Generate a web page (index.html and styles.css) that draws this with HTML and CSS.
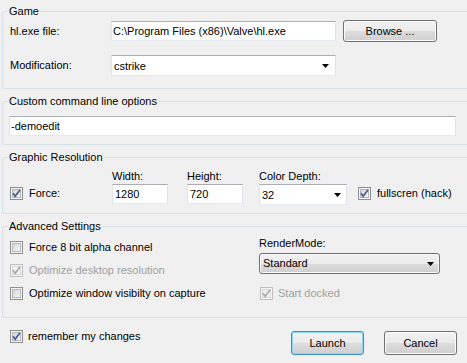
FILE: index.html
```html
<!DOCTYPE html>
<html>
<head>
<meta charset="utf-8">
<link rel="stylesheet" href="styles.css">
</head>
<body>
<div class="dialog">
  <fieldset class="group game">
    <legend>Game</legend>
    <div class="row r1">
      <span class="lbl">hl.exe file:</span>
      <div class="tb path">C:\Program Files (x86)\Valve\hl.exe</div>
      <button class="btn browse">Browse ...</button>
    </div>
    <div class="row r2">
      <span class="lbl">Modification:</span>
      <div class="tb combo path"><span>cstrike</span><svg class="arrow" width="7" height="4" viewBox="0 0 7 4"><path d="M0 0H7L3.5 4Z"/></svg></div>
    </div>
  </fieldset>

  <fieldset class="group custom">
    <legend>Custom command line options</legend>
    <div class="tb cmd">-demoedit</div>
  </fieldset>

  <fieldset class="group graphic">
    <legend>Graphic Resolution</legend>
    <div class="res">
      <span class="h-width">Width:</span>
      <span class="h-height">Height:</span>
      <span class="h-depth">Color Depth:</span>
      <label class="check force"><span class="cb on"><svg width="11" height="11" viewBox="0 0 11 11"><path d="M2 5.2L4.2 8.2L9 1.8"/></svg></span><span>Force:</span></label>
      <div class="tb num in-width">1280</div>
      <div class="tb num in-height">720</div>
      <div class="tb combo depth"><span>32</span><svg class="arrow" width="7" height="4" viewBox="0 0 7 4"><path d="M0 0H7L3.5 4Z"/></svg></div>
      <label class="check full"><span class="cb on"><svg width="11" height="11" viewBox="0 0 11 11"><path d="M2 5.2L4.2 8.2L9 1.8"/></svg></span><span>fullscren (hack)</span></label>
    </div>
  </fieldset>

  <fieldset class="group adv">
    <legend>Advanced Settings</legend>
    <div class="adv-body">
      <div class="left">
        <label class="check"><span class="cb"></span><span>Force 8 bit alpha channel</span></label>
        <label class="check dis"><span class="cb on"><svg width="11" height="11" viewBox="0 0 11 11"><path d="M2 5.2L4.2 8.2L9 1.8"/></svg></span><span>Optimize desktop resolution</span></label>
        <label class="check"><span class="cb"></span><span>Optimize window visibilty on capture</span></label>
      </div>
      <div class="right">
        <span>RenderMode:</span>
        <div class="btn combo rm"><span>Standard</span><svg class="arrow" width="7" height="4" viewBox="0 0 7 4"><path d="M0 0H7L3.5 4Z"/></svg></div>
        <label class="check dis docked"><span class="cb on"><svg width="11" height="11" viewBox="0 0 11 11"><path d="M2 5.2L4.2 8.2L9 1.8"/></svg></span><span>Start docked</span></label>
      </div>
    </div>
  </fieldset>

  <div class="footer">
    <label class="check remember"><span class="cb on"><svg width="11" height="11" viewBox="0 0 11 11"><path d="M2 5.2L4.2 8.2L9 1.8"/></svg></span><span>remember my changes</span></label>
    <button class="btn act launch">Launch</button>
    <button class="btn act cancel">Cancel</button>
  </div>
</div>
</body>
</html>
```

FILE: styles.css
```css
html, body {
  margin: 0;
  background: #f0f0f0;
  overflow: hidden;
}
body {
  width: 467px;
  height: 363px;
  font: 11px/13px "Liberation Sans", Arial, sans-serif;
  color: #000;
}
.dialog {
  padding-top: 5px;
}
.group {
  margin: 0 -8px 0 2px;
  padding: 0;
  border: 1px solid #d5dfe5;
  border-radius: 3px;
  min-inline-size: 0;
}
.group + .group {
  margin-top: 6px;
}
legend {
  margin-left: 5px;
  padding: 0 1px;
  line-height: 13px;
}
.row {
  display: flex;
  align-items: center;
  padding-left: 7px;
}
.lbl {
  width: 101px;
}
.game {
  padding-bottom: 12px;
}
.game .r1 {
  margin-top: 2px;
  height: 22px;
}
.game .r2 {
  margin-top: 13px;
  height: 21px;
}
.tb {
  box-sizing: border-box;
  height: 20px;
  background: #fff;
  border: 1px solid;
  border-color: #abadb3 #e2e3ea #e3e9ef #e2e3ea;
  padding: 0 1px;
  line-height: 18px;
  white-space: nowrap;
  overflow: hidden;
}
.path {
  width: 225px;
}
.combo {
  display: flex;
  align-items: center;
  justify-content: space-between;
  height: 21px;
  padding: 0 6px 0 2px;
}
.arrow path {
  fill: #000;
}
.btn {
  box-sizing: border-box;
  border: 1px solid #707070;
  border-radius: 3px;
  background: linear-gradient(#f2f2f2, #ebebeb 50%, #dddddd 50%, #cfcfcf);
  box-shadow: inset 0 0 0 1px #fbfbfb;
  font: inherit;
  color: #000;
  padding: 0;
  text-align: center;
}
.browse {
  width: 94px;
  height: 22px;
  margin-left: 7px;
}
.custom {
  padding-bottom: 8px;
}
.cmd {
  margin: 8px 0 0 6px;
  width: 447px;
}
.graphic {
  padding-bottom: 8px;
}
.res {
  display: grid;
  grid-template-columns: 102px 75px 72px 99px auto;
  grid-template-rows: 13px 21px;
  row-gap: 1px;
  margin-top: 6px;
  padding-left: 7px;
}
.h-width { grid-column: 2; grid-row: 1; }
.h-height { grid-column: 3; grid-row: 1; }
.h-depth { grid-column: 4; grid-row: 1; }
.force { grid-column: 1; grid-row: 2; align-self: center; margin-top: -2px; }
.in-width { grid-column: 2; grid-row: 2; }
.in-height { grid-column: 3; grid-row: 2; }
.depth { grid-column: 4; grid-row: 2; }
.full { grid-column: 5; grid-row: 2; align-self: center; margin-top: -2px; gap: 5px; }
.num {
  width: 56px;
  padding-left: 2px;
}
.depth {
  width: 88px;
  padding: 0 5px 0 2px;
}
.check {
  display: flex;
  align-items: center;
  gap: 6px;
  height: 13px;
}
.cb {
  position: relative;
  flex: none;
  box-sizing: border-box;
  width: 13px;
  height: 13px;
  border: 1px solid #8e8f8f;
  background: #f4f4f4;
  padding: 1px;
}
.cb::before {
  content: "";
  display: block;
  box-sizing: border-box;
  width: 9px;
  height: 9px;
  border: 1px solid #b4b8bd;
  background: linear-gradient(135deg, #d2d4d8, #f7f7f7);
}
.cb svg {
  position: absolute;
  left: 0;
  top: 0;
}
.cb svg path {
  fill: none;
  stroke: #4a5d8f;
  stroke-width: 1.7;
}
.dis {
  color: #a0a0a0;
}
.dis .cb {
  border-color: #c0c0c0;
}
.dis .cb::before {
  border-color: #d8d8d8;
  background: #f4f4f4;
}
.dis .cb svg path {
  stroke: #a8a8a8;
}
.adv-body {
  display: flex;
  padding-left: 7px;
  padding-bottom: 17px;
}
.left {
  width: 249px;
  display: flex;
  flex-direction: column;
  gap: 10px;
  margin-top: 8px;
}
.right {
  display: flex;
  flex-direction: column;
  margin-top: 4px;
}
.rm {
  margin-top: 3px;
  width: 181px;
  height: 21px;
  padding: 0 5px 0 3px;
  text-align: left;
}
.docked {
  margin-top: 13px;
  margin-left: 1px;
  gap: 5px;
}
.footer {
  display: flex;
  align-items: flex-start;
  margin-top: 12px;
  padding: 0 10px;
}
.remember {
  gap: 5px;
}
.act {
  width: 73px;
  height: 24px;
  margin-top: 1px;
}
.launch {
  margin-left: auto;
  border-color: #3c8fcd;
  box-shadow: inset 0 0 0 1px #8ed6f7;
}
.cancel {
  margin-left: 20px;
}
```
